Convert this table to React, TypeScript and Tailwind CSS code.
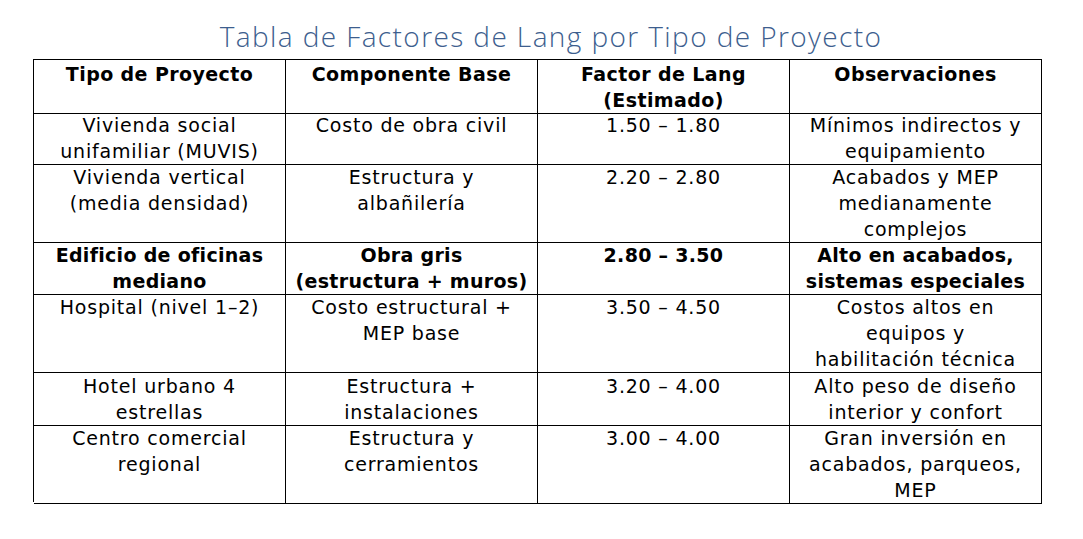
import React from 'react'

type Row = { cells: string[]; bold?: boolean; h: string }

const rows: Row[] = [
    { cells: ['Vivienda social\nunifamiliar (MUVIS)', 'Costo de obra civil', '1.50 – 1.80', 'Mínimos indirectos y\nequipamiento'], h: 'h-[52px]' },
    { cells: ['Vivienda vertical\n(media densidad)', 'Estructura y\nalbañilería', '2.20 – 2.80', 'Acabados y MEP\nmedianamente\ncomplejos'], h: 'h-[78px]' },
    { cells: ['Edificio de oficinas\nmediano', 'Obra gris\n(estructura + muros)', '2.80 – 3.50', 'Alto en acabados,\nsistemas especiales'], bold: true, h: 'h-[52px]' },
    { cells: ['Hospital (nivel 1–2)', 'Costo estructural +\nMEP base', '3.50 – 4.50', 'Costos altos en\nequipos y\nhabilitación técnica'], h: 'h-[79px]' },
    { cells: ['Hotel urbano 4\nestrellas', 'Estructura +\ninstalaciones', '3.20 – 4.00', 'Alto peso de diseño\ninterior y confort'], h: 'h-[52px]' },
    { cells: ['Centro comercial\nregional', 'Estructura y\ncerramientos', '3.00 – 4.00', 'Gran inversión en\nacabados, parqueos,\nMEP'], h: 'h-[78px]' },
]

const headers = ['Tipo de Proyecto', 'Componente Base', 'Factor de Lang\n(Estimado)', 'Observaciones']

export default function App() {
    return (
        <div className="w-[1083px] h-[539px] bg-white text-black font-['DejaVu_Sans',sans-serif] pt-[18px]">
            <h1 className="text-center font-['Open_Sans',sans-serif] text-[28px] leading-[36px] font-light text-[#3d5e8e] tracking-[1.4px] ml-[19px]">
                Tabla de Factores de Lang por Tipo de Proyecto
            </h1>
            <div className="ml-[33px] mt-[5px] w-[1009px] border-t border-l border-black">
                <div className="grid grid-cols-4 h-[51px]">
                    {headers.map((h) => (
                        <div key={h} className="border-r border-b border-black text-center font-bold text-[19px] tracking-[0.4px] leading-[26px] whitespace-pre-line pt-[1px]">
                            {h}
                        </div>
                    ))}
                </div>
                {rows.map((r, i) => (
                    <div key={i} className={`grid grid-cols-4 ${r.h}`}>
                        {r.cells.map((c, j) => (
                            <div key={j} className={`border-r border-b border-black text-center text-[19px] leading-[26px] whitespace-pre-line pt-[1px] ${r.bold ? 'font-bold tracking-[0.3px]' : 'font-normal tracking-[0.8px]'}`}>
                                {c}
                            </div>
                        ))}
                    </div>
                ))}
            </div>
        </div>
    )
}
